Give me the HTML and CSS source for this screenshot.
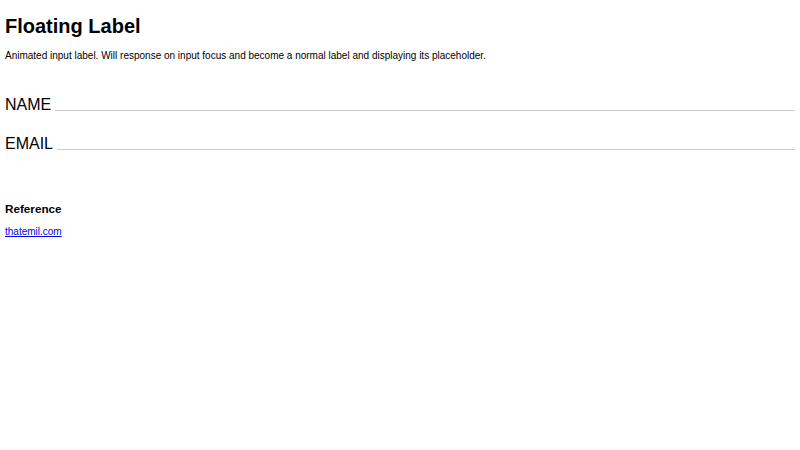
FILE: index.html
```html
<!DOCTYPE html>
<html>
<head>
<meta charset="utf-8">
<link rel="stylesheet" href="styles.css">
</head>
<body>
<h1 class="title">Floating Label</h1>
<p class="desc">Animated input label. Will response on input focus and become a normal label and displaying its placeholder.</p>
<form class="form">
  <div class="field">
    <input class="input" type="text" id="name">
    <label class="label" for="name">NAME</label>
  </div>
  <div class="field">
    <input class="input" type="email" id="email">
    <label class="label" for="email">EMAIL</label>
  </div>
</form>
<h3 class="ref-title">Reference</h3>
<p class="ref"><a class="ref-link" href="#">thatemil.com</a></p>
</body>
</html>
```
FILE: styles.css
```css
html, body { background: #fff; }
body {
  margin: 0;
  padding: 5px;
  font-family: "Liberation Sans", Arial, sans-serif;
  font-size: 10px;
  color: #000;
}
.title {
  font-size: 20px;
  font-weight: bold;
  margin: 10px 0 0;
}
.desc {
  font-size: 10px;
  margin: 12px 0 0;
}
.form {
  margin-top: 25px;
  display: flex;
  flex-direction: column;
  gap: 14px;
  width: 790px;
}
.field {
  position: relative;
  height: 25px;
}
.input {
  box-sizing: border-box;
  display: block;
  width: 100%;
  height: 25px;
  border: 0;
  border-bottom: 1px solid #ccc;
  background: transparent;
  padding: 0;
  margin: 0;
  outline: none;
}
.label {
  position: absolute;
  left: 0;
  bottom: -3px;
  background: #fff;
  padding-right: 4px;
  font-size: 16px;
  letter-spacing: 0;
  line-height: 18px;
}
.ref-title {
  font-size: 11.7px;
  font-weight: bold;
  margin: 52px 0 0;
}
.ref {
  margin: 11px 0 0;
  font-size: 10px;
}
.ref-link {
  color: #0000ee;
}
```
